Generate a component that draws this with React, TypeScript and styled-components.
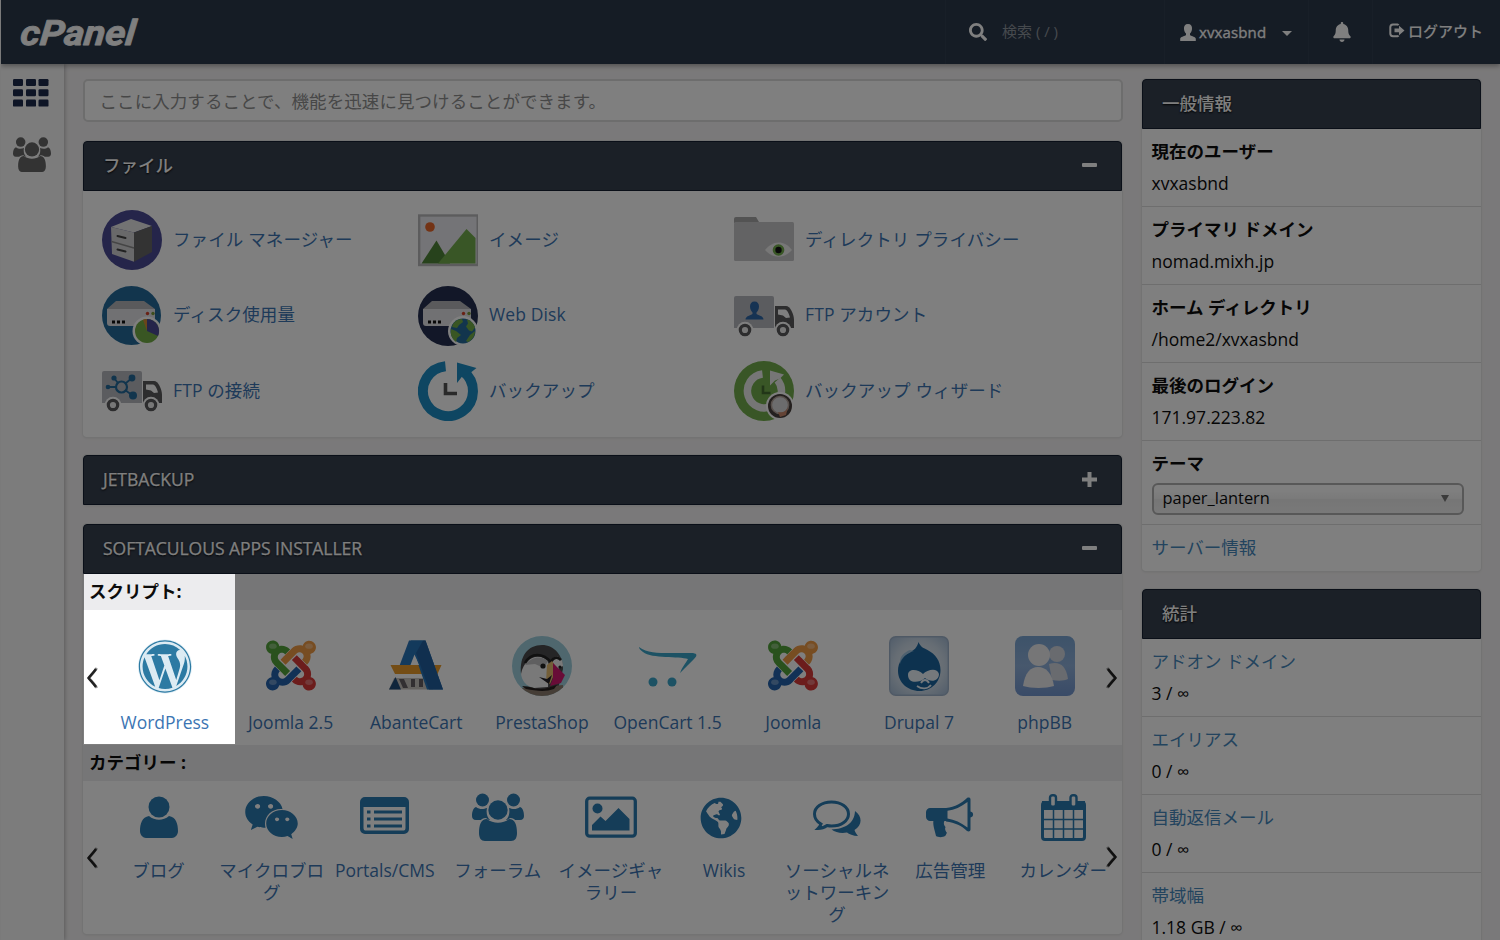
import React from "react";
import styled, { createGlobalStyle, css } from "styled-components";
import { FaWordpress, FaGlobeAmericas, FaWeixin, FaBell, FaSearch } from "react-icons/fa";

const GlobalStyle = createGlobalStyle`
  * { box-sizing: border-box; }
  html, body { margin: 0; padding: 0; overflow: hidden; }
  body {
    font-family: "Open Sans", "Noto Sans CJK JP", sans-serif;
    font-size: 17.5px;
    color: #0c0c0c;
    background: #f5f3f4;
  }
  svg { display: block; flex: none; }
`;

const navy = "#2b384a";
const panelNavy = "#36404f";
const link = "#3c75b3";
const iconBlue = "#2b7ab0";

const Page = styled.div`
  position: relative;
  width: 1500px;
  height: 940px;
  overflow: hidden;
  border-left: 1px solid #7a7a7a;
  background: #f5f3f4;
  display: flex;
  flex-direction: column;
`;

/* ---------- top bar ---------- */
const TopBar = styled.header`
  height: 64px;
  flex: none;
  display: flex;
  align-items: stretch;
  background: ${navy};
  color: #fff;
  font-size: 15px;
  box-shadow: 0 2px 5px rgba(0, 0, 0, 0.35);
  z-index: 1;
`;
const Brand = styled.div`
  flex: 1;
  display: flex;
  align-items: center;
  padding-left: 18px;
`;
const NavCell = styled.div<{ $w: number; $pad: number; $lift?: number }>`
  width: ${(p) => p.$w}px;
  padding-left: ${(p) => p.$pad}px;
  padding-bottom: ${(p) => p.$lift ?? 0}px;
  display: flex;
  align-items: center;
  border-left: 1px solid #303e50;
  white-space: nowrap;
`;
const SearchHint = styled.span`
  margin-left: 15px;
  padding-bottom: 4px;
  color: #8d949c;
`;
const NavText = styled.span<{ $latin?: boolean }>`
  margin-left: 3px;
  padding-bottom: 1px;
  font-weight: 500;
  -webkit-text-stroke: ${(p) => (p.$latin ? "0.3px #fff" : "0")};
  letter-spacing: ${(p) => (p.$latin ? "0.12px" : "0")};
`;
const Caret = styled.span`
  margin: 3px 0 0 16px;
  border: 5px solid transparent;
  border-top-color: #fff;
  border-bottom: 0;
`;

/* ---------- frame ---------- */
const Body = styled.div`
  flex: 1;
  display: flex;
  min-height: 0;
`;
const Sidebar = styled.nav`
  width: 63px;
  flex: none;
  padding: 15px 0 0 12px;
  display: flex;
  flex-direction: column;
  gap: 30px;
  background: #f9f9f9;
  box-shadow: 1px 0 4px rgba(0, 0, 0, 0.25);
`;
const Main = styled.main`
  width: 1040px;
  margin-left: 19px;
  padding: 15px 1.5px 0 0;
  flex: none;
`;
const Aside = styled.aside`
  width: 339px;
  margin-left: 19px;
  padding-top: 15px;
  flex: none;
`;
const QuickFind = styled.div`
  height: 43px;
  margin-right: -1.5px;
  border: 2px solid #dadada;
  border-radius: 5px;
  background: #fff;
  padding-left: 14.5px;
  line-height: 40px;
  letter-spacing: 0.07px;
  color: #8f8f8f;
`;

/* ---------- panels ---------- */
const Panel = styled.section<{ $top: number }>`
  margin-top: ${(p) => p.$top}px;
  background: #fff;
  border-radius: 4px;
  box-shadow: 0 0 0 1px #e6e6e6, 0 1px 3px rgba(0, 0, 0, 0.1);
`;
const PanelHead = styled.h2`
  margin: 0;
  height: 50px;
  padding: 0 24px 2px 19px;
  display: flex;
  align-items: center;
  justify-content: space-between;
  border: 1px solid #151f30;
  border-radius: 4px 4px 0 0;
  background: ${panelNavy};
  color: #fff;
  font-size: 17.5px;
  font-weight: 500;
  text-shadow: 0 1px 2px #000;
`;
const HeadText = styled.span<{ $latin?: boolean }>`
  letter-spacing: ${(p) => (p.$latin ? "-0.03px" : "0")};
  -webkit-text-stroke: ${(p) => (p.$latin ? "0.25px #fff" : "0")};
  padding-bottom: ${(p) => (p.$latin ? 0 : 2)}px;
`;
const FileGrid = styled.div`
  height: 246px;
  padding: 19px 0 0 19px;
  display: grid;
  grid-template-columns: repeat(3, 316px);
  grid-template-rows: repeat(3, 60px);
  row-gap: 15.5px;
`;
const Tool = styled.a`
  display: flex;
  align-items: center;
  gap: 11px;
  color: ${link};
  white-space: nowrap;
`;
const ToolName = styled.span`
  padding-bottom: 4px;
  letter-spacing: 0.12px;
`;
const StripTitle = styled.div`
  height: 36px;
  padding-left: 6px;
  line-height: 34px;
  font-weight: 700;
  background: #ececee;
`;
const Strip = styled.div<{ $h: number }>`
  height: ${(p) => p.$h}px;
  position: relative;
  padding-left: 19px;
  display: flex;
`;
const Arrow = styled.span<{ $side: "left" | "right"; $top: number }>`
  position: absolute;
  top: ${(p) => p.$top}px;
  ${(p) => (p.$side === "left" ? css`left: 3px;` : css`right: 3.5px;`)}
`;
const Script = styled.a`
  width: 125.7px;
  flex: none;
  padding-top: 26px;
  display: flex;
  flex-direction: column;
  align-items: center;
  color: ${link};
  white-space: nowrap;
`;
const ScriptName = styled.span`
  margin-top: 14px;
  line-height: 24px;
`;
const Category = styled.a`
  width: 113.1px;
  flex: none;
  display: flex;
  flex-direction: column;
  align-items: center;
  color: ${link};
  text-align: center;
  white-space: nowrap;
`;
const CatIcon = styled.span<{ $top: number; $right: number }>`
  height: 78px;
  padding-top: ${(p) => p.$top}px;
  padding-right: ${(p) => p.$right}px;
  display: flex;
  align-items: flex-start;
`;
const CatLabel = styled.span`
  line-height: 22px;
`;

/* ---------- info column ---------- */
const InfoRow = styled.div<{ $h?: number }>`
  height: ${(p) => p.$h ?? 78}px;
  padding: 6px 0 0 9.5px;
  line-height: 32px;
  border-bottom: 1px solid #dcdcdc;
  white-space: nowrap;
  &:last-child { border-bottom: 0; }
`;
const InfoName = styled.div<{ $link?: boolean }>`
  font-weight: ${(p) => (p.$link ? 400 : 700)};
  color: ${(p) => (p.$link ? "#4688bd" : "inherit")};
`;
const ThemeSelect = styled.div`
  width: 312px;
  height: 32px;
  margin-top: 3.5px;
  padding: 0 13px 1px 9px;
  display: flex;
  align-items: center;
  justify-content: space-between;
  border: 2px solid #b0b0b0;
  border-radius: 6px;
  font-size: 16.4px;
  background: linear-gradient(#fff 20%, #f4f4f4 50%, #ececec 52%, #f3f3f3);
`;
const Triangle = styled.span`
  border: 4px solid transparent;
  border-top: 7px solid #777;
  border-bottom: 0;
`;

/* Dims the page except for the highlighted first script. */
const Spotlight = styled.div`
  position: absolute;
  left: 83px;
  top: 574px;
  width: 151px;
  height: 170px;
  box-shadow: 0 0 0 2000px rgba(0, 0, 0, 0.5);
  pointer-events: none;
  z-index: 5;
`;

/* ---------- drawings ---------- */
const Logo = () => (
  <svg width="124" height="40" viewBox="0 0 124 40">
    <text x="4" y="32.500" transform="skewX(-6)" textLength="115" lengthAdjust="spacingAndGlyphs" fill="#fff" stroke="#fff" strokeWidth=".8" strokeLinejoin="round"
      fontFamily="Roboto, sans-serif" fontWeight="700" fontStyle="italic" fontSize="35">cPanel</text>
  </svg>
);
const GridIcon = () => (
  <svg width="36" height="28" viewBox="0 0 36 28" fill="#1d2a4c">
    {[0, 10.3, 20.6].map((y) => [0, 13, 25.5].map((x) => <rect key={`${x}-${y}`} x={x} y={y} width="10" height="7" rx="1.2" />))}
  </svg>
);
const UsersIcon = ({ w, color }: { w: number; color: string }) => (
  <svg width={w} height={(w * 48) / 52} viewBox="0 0 52 48" fill={color}>
    <circle cx="10.5" cy="7" r="6.5" />
    <circle cx="41.5" cy="7" r="6.5" />
    <path d="M4 14c4 3 8 2 11 1-1 5 0 9 3 12H4c-3 0-4-2-4-4 0-4 1-8 4-9zM48 14c-4 3-8 2-11 1 1 5 0 9-3 12h14c3 0 4-2 4-4 0-4-1-8-4-9z" />
    <circle cx="26" cy="17" r="11" fill="#fff" />
    <path d="M14 25c6 5 18 5 24 0 6 0 9 6 9 14H5c0-8 3-14 9-14z" fill="#fff" />
    <circle cx="26" cy="17" r="9.7" />
    <path d="M15 26c6 5 16 5 22 0 6 0 8 6 8 14 0 5-2 8-6 8H13c-4 0-6-3-6-8 0-8 2-14 8-14z" />
  </svg>
);
const PersonSmall = () => (
  <svg width="16" height="17" viewBox="0 0 16 17" fill="#fff">
    <path d="M8 0c3 0 4.300 2 4 5-.2 2-1 3.500-2 4.500v1.800c2 1 5.500 1.700 5.800 3.500V17H.2v-2.200c.3-1.800 3.800-2.500 5.800-3.500V9.500C5 8.500 4.200 7 4 5c-.3-3 1-5 4-5z" />
  </svg>
);
const LogoutIcon = () => (
  <svg width="16" height="15" viewBox="0 0 16 15">
    <path d="M9.500 2.200A1.500 1.500 0 0 0 8.500 1.500H4A2.800 2.800 0 0 0 1.300 4.300v6.200A2.800 2.800 0 0 0 4 13.300h4.500a1.500 1.500 0 0 0 1-.8" fill="none" stroke="#fff" strokeWidth="2" />
    <path d="M5.500 5.500h4.500V2.700l5.500 4.700-5.500 4.800V9.300H5.500z" fill="#fff" />
  </svg>
);
const Chevron = ({ flip }: { flip?: boolean }) => (
  <svg width="13" height="24" viewBox="0 0 13 24">
    <g transform={flip ? "translate(13 0) scale(-1 1)" : undefined} fill="none">
      <path d="M10.800 2C9 5 5 9.500 3 12c2 2.500 6 6.500 7.800 10" stroke="#999" strokeWidth="2.600" />
      <path d="M10 3C8 6 4 10 2.500 12c1.500 2 5.500 6 7.500 9" stroke="#222" strokeWidth="2.400" />
    </g>
  </svg>
);
const Minus = () => <svg width="15" height="5"><rect width="15" height="4" rx="1" fill="#fff" /></svg>;
const Plus = () => <svg width="15" height="15"><path d="M5.500 0h4v5.500H15v4H9.500V15h-4V9.500H0v-4h5.500z" fill="#fff" /></svg>;

const S = (p: { children: React.ReactNode }) => <svg width="60" height="60" viewBox="0 0 60 60">{p.children}</svg>;

const FileManagerIcon = () => (
  <S>
    <circle cx="30" cy="30" r="30" fill="#4b4a94" />
    <path d="M9 17 29 9l21 7-18 6.500z" fill="#e6e6e6" />
    <path d="M9 17l23 5.500v29.300L10 44z" fill="#d2d2d4" />
    <path d="M32 22.500 50 16v26L32 51.800z" fill="#666" />
    <path d="M9.500 31.500 32 38" stroke="#8b8b8b" strokeWidth="1.500" />
    <path d="M15.500 26l8 2M15.500 39.500l8 2" stroke="#444" strokeWidth="2" strokeLinecap="round" />
  </S>
);
const Drive = () => (
  <>
    <path d="M14 15h28l11 8H5z" fill="#b5b5b8" />
    <path d="M5 23h48v14a3 3 0 0 1-3 3H8a3 3 0 0 1-3-3z" fill="#e2e2e6" />
    <path d="M10 34.500h3v3h-3zM15 34.500h3v3h-3zM20 34.500h3v3h-3z" fill="#111" />
    <circle cx="45.500" cy="27.500" r="1.700" fill="#d2432b" />
    <circle cx="51" cy="27.500" r="1.700" fill="#7a9c3a" />
  </>
);
const DiskUsageIcon = () => (
  <S>
    <circle cx="29.500" cy="29.500" r="29.500" fill="#246b9b" />
    <Drive />
    <circle cx="45" cy="45" r="14.500" fill="#fff" />
    <circle cx="45" cy="45" r="12" fill="#72ad47" />
    <path d="M45 45V33a12 12 0 0 1 11 17z" fill="#4b4a94" />
    <path d="M45 45V33a12 12 0 0 0-4 .8z" fill="#d58a35" />
  </S>
);
const WebDiskIcon = () => (
  <S>
    <circle cx="30" cy="30" r="30" fill="#242e50" />
    <Drive />
    <circle cx="45" cy="45" r="15" fill="#fff" />
    <circle cx="45" cy="45" r="12.500" fill="#246b9b" />
    <path d="M35 38c3-4 6-5 9-5l1 3-4 3-2 3-5-1zM33 43l5 2 5 4-4 3-1 4c-4-3-6-8-5-13zM49 33.500c4 1 7 4 8 8l-3 4-3-1-3-4 2-3zM57 45c0 5-3 9-7 11l-2-1 4-6z" fill="#72ad47" />
  </S>
);
const ImagesIcon = () => (
  <S>
    <rect x="1.200" y="5.500" width="58.500" height="49.500" fill="#e9e9ee" stroke="#b9b9bb" strokeWidth="2.400" />
    <circle cx="12" cy="17" r="4.800" fill="#e7662b" />
    <path d="M3.500 53.500 18.500 30.500 32 53.500z" fill="#4f8438" />
    <path d="M20 53.500 48.500 19 57.500 28v25.500z" fill="#72ad4c" />
  </S>
);
const PrivacyIcon = () => (
  <S>
    <path d="M0 13V9a2 2 0 0 1 2-2h20l3 5z" fill="#a6a6a6" />
    <rect y="12" width="60" height="39" rx="1.500" fill="#c7c7c9" />
    <path d="M31 40c6-8 18-12 27 0-8 9-19 9-27 0z" fill="#eee" />
    <circle cx="44.500" cy="40" r="5.800" fill="#72ad4c" />
    <circle cx="44.500" cy="40" r="3.200" fill="#111" />
  </S>
);
const Truck = () => (
  <>
    <path d="M0 12a2 2 0 0 1 2-2h36a2 2 0 0 1 2 2v30H0z" fill="#b7b8bf" />
    <path d="M41 20h11c4 0 8 8 8 14v8H41z" fill="#5a5a5c" />
    <path d="M44 23.500h7c2 0 4 4 5 8l-4 .5-3-2.500-5-1z" fill="#fff" />
    {[11, 49].map((x) => (
      <g key={x}>
        <circle cx={x} cy="44" r="8.300" fill="#fff" />
        <circle cx={x} cy="44" r="4.700" fill="#eee" stroke="#5a5a5c" strokeWidth="3.200" />
      </g>
    ))}
  </>
);
const FtpAccountsIcon = () => (
  <S>
    <Truck />
    <path d="M20.500 15.500c3 0 4.500 2 4.500 5s-1.500 5-2.500 6v1.500c2 1.500 7 2 7 5.500h-18c0-3.500 5-4 7-5.500V26.500c-1-1-2.500-3-2.500-6s1.500-5 4.500-5z" fill="#2d66a6" />
  </S>
);
const FtpConnectionIcon = () => (
  <S>
    <Truck />
    <g stroke="#246b9b" strokeWidth="1.800" fill="none">
      <path d="M6 26h8M12 17l4 5M24 22l6-5M23 29l7 5" />
      <circle cx="19.500" cy="26" r="5.500" strokeWidth="2.200" />
    </g>
    <g fill="#246b9b"><circle cx="6" cy="26" r="2.300" /><circle cx="12" cy="17" r="2.600" /><circle cx="30" cy="17" r="3.400" /><circle cx="31" cy="34.500" r="4" /></g>
  </S>
);
const BackupIcon = () => (
  <S>
    <path d="M27.500 5.200A25 25 0 1 0 45.500 10.500" fill="none" stroke="#1c8dc4" strokeWidth="10" />
    <path d="M39 1.500 58.500 7l-5 4-9 4-5.500 7z" fill="#1c8dc4" />
    <path d="M27.500 22v10.500H39" fill="none" stroke="#555" strokeWidth="3.600" />
  </S>
);
const WizardIcon = () => (
  <S>
    <circle cx="30" cy="30" r="30" fill="#72ad4c" />
    <path d="M28.500 13A17 17 0 1 0 43.500 19" fill="none" stroke="#ececec" strokeWidth="7.500" />
    <path d="M36 9.500 50 13.500l-4 4-5 2-5 5z" fill="#ececec" />
    <path d="M29 24.500v7.500h7.500" fill="none" stroke="#446c30" strokeWidth="2.600" />
    <circle cx="46" cy="45" r="14" fill="#fff" />
    <circle cx="46" cy="45" r="12" fill="#49403e" />
    <circle cx="46" cy="44" r="8.600" fill="#d9d9db" stroke="#b3a39a" strokeWidth="1.500" />
    <path d="M44 51c4 1 8 0 10-5l-2 8-6 2z" fill="#c8876a" />
  </S>
);

const arm =
  "M.6 92.100C.6 58.800 27.400 32 60.400 32c30 0 54.500 21.900 59.200 50.200 32.600-7.600 67.100.6 96.500 30l-44.300 44.300c-20.500-20.500-42.600-16.300-55.400-3.500-14.300 14.300-14.300 37.900 0 52.200l99.500 99.500-44 44.300c-87.700-87.200-49.700-49.700-99.800-99.700-26.800-26.500-35-64.800-24.800-98.900C20.400 144.600.6 120.700.6 92.100z";
const JoomlaIcon = () => (
  <S>
    <g transform="translate(5 1) scale(.1115)">
      {[["#52a33b", 0], ["#ef9a45", 90], ["#d83a38", 180], ["#2463ac", 270]].map(([c, r]) => (
        <path key={r} d={arm} fill={c as string} transform={`rotate(${r} 224 256)`} />
      ))}
      {[[62, 82], [386, 82], [62, 406], [386, 406]].map(([x, y]) => (
        <ellipse key={`${x}${y}`} cx={x} cy={y} rx="34" ry="24" fill="#fff" opacity=".3" />
      ))}
    </g>
  </S>
);
const WordPressIcon = () => (
  <S>
    <circle cx="30" cy="30.500" r="27" fill="#dcebf3" />
    <g transform="translate(3 3.500)"><FaWordpress size={54} color="#2c7aa3" /></g>
  </S>
);
const AbanteIcon = () => (
  <S>
    <path d="M3 53.500 8 42h39v11.500z" fill="#c9c4bf" />
    <path d="M3 53.500 9.500 41 15 53.500z" fill="#214a76" />
    <path d="M13 43h5l4 9h-5zM25 43h4v8h-4zM33 43h4v8h-4z" fill="#655f63" />
    <path d="M13 31 23 4.500h14L24 34H13z" fill="#2d75b8" />
    <path d="M4.500 29h51l-4 9H9z" fill="#e89a2a" />
    <path d="M25 4.500h14.500L57 53.500H41L28.500 18l-5 11h-9z" fill="#2674b8" />
    <path d="M28.500 18.500 33 29h-8.500z" fill="#fff" />
    <path d="M30 17 37 4.500h2.500L57 53.500H43z" fill="#205f9f" />
  </S>
);
const PrestaIcon = () => (
  <S>
    <defs><clipPath id="presta"><circle cx="30" cy="30" r="30" /></clipPath></defs>
    <g clipPath="url(#presta)">
      <rect width="60" height="60" fill="#9ecfdd" />
      <path d="M9 38C7 20 16 9 30 9c12 0 21 10 21 24l-5 20-20 2z" fill="#4b4a4c" />
      <path d="M9 38c2-12 11-19 20-17 4 1 7 4 8 8l-1 22-14 1C13 50 10 44 9 38z" fill="#f2f2f2" />
      <path d="M13 29c6-8 16-10 23-4l-4 7-9-4z" fill="#bfbfc1" />
      <path d="M41 22c5-4 10 1 10 8l-5 3-6-6z" fill="#f2f2f2" />
      <path d="M13 27C19 16 31 17 39 26c3-6 7-5 10-2" fill="none" stroke="#222" strokeWidth="2.600" />
      <path d="M35 29l5-4 5 7-7 16-4-2z" fill="#e7bd71" />
      <path d="M41 27 53 39l-4 8-11 3 3-8z" fill="#d1186f" />
      <path d="M40 39l-3 9-10-7 8 2z" fill="#252126" />
      <circle cx="31" cy="30" r="2.600" fill="#222" /><circle cx="48" cy="31" r="1.600" fill="#222" />
      <path d="M10 52c8-3 10 0 16 1 9 1 16-4 25-4v11H10z" fill="#8c7d6f" />
      <path d="M10 50c10 0 15 5 25 2l10-3-3 4c-8 3-18 2-28 0z" fill="#27211f" />
    </g>
  </S>
);
const OpenCartIcon = () => (
  <S>
    <path d="M1 11c8 6 18 6 32 6h20c6 0 7 2 3 6L42 37c2-6 6-10 8-14-9-3-36 0-45-7-3-2-4-4-4-5z" fill="#3aa5c8" />
    <circle cx="15" cy="46" r="4.500" fill="#3aa5c8" /><circle cx="34" cy="46" r="4.500" fill="#3aa5c8" />
  </S>
);
const DrupalIcon = () => (
  <S>
    <defs><radialGradient id="dr" r=".72"><stop offset="0" stopColor="#f4f8fb" /><stop offset=".6" stopColor="#ccdae8" /><stop offset="1" stopColor="#9db6d2" /></radialGradient></defs>
    <rect x=".7" y=".7" width="58.600" height="58.600" rx="6" fill="url(#dr)" stroke="#9fb3cb" strokeWidth="1.400" />
    <path d="M29.500 6c2 5 5 6 9 8 8 4 13 11 13 20 0 12-9 21-21 21S9 46 9 35c0-9 5-15 11-18 5-3 8-5 9.500-11z" fill="#1b659f" />
    <path d="M25 15C17 17 13 22 11 28c-1-8 5-12 10-14z" fill="#84b5da" opacity=".7" />
    <path d="M19 39c0-7 10-6 15-1 4-4 14-7 16 0 0 7-8 9-14 4-7 6-17 5-17-3z" fill="#eaf2f8" />
    <path d="M32 47c2-4 6-4 8 0M28 50c5 3.500 11 3 14-1" fill="none" stroke="#eaf2f8" strokeWidth="1.800" />
  </S>
);
const PhpBBIcon = () => (
  <S>
    <defs><linearGradient id="pb" x2="0" y2="1"><stop offset="0" stopColor="#7ba6d4" /><stop offset=".5" stopColor="#8fb0da" /><stop offset="1" stopColor="#7396cf" /></linearGradient></defs>
    <rect width="60" height="60" rx="8" fill="url(#pb)" />
    <g fill="#d2d6de"><circle cx="42" cy="18" r="8" /><path d="M34 28c10-3 17 1 19 15-4 2-10 2-16 1z" /></g>
    <g fill="#ececef"><circle cx="24" cy="19" r="11" /><path d="M8 50c2-13 7-19 15-19s14 6 16 19c-8 2.500-23 2.500-31 0z" /></g>
  </S>
);

const BlogIcon = () => (
  <svg width="38" height="46" viewBox="0 0 38 46" fill={iconBlue}>
    <circle cx="19" cy="14" r="10.500" />
    <path d="M9 23c6 5 14 5 20 0 7 1 9 8 9 15 0 4-3 7-6 7H6c-3 0-6-3-6-7 0-7 2-14 9-15z" />
  </svg>
);
const PortalsIcon = () => (
  <svg width="49" height="44" viewBox="0 0 49 44" fill={iconBlue}>
    <path fillRule="evenodd" d="M5 4h39a5 5 0 0 1 5 5v27a5 5 0 0 1-5 5H5a5 5 0 0 1-5-5V9a5 5 0 0 1 5-5zM3.500 14v21c0 2 1 2.500 2.500 2.500h37c1.500 0 2.500-.5 2.500-2.500V14z" />
    <path d="M7 17.500h3.500v3H7zM14 17.500h28v3H14zM7 24.500h3.500v3H7zM14 24.500h28v3H14zM7 31.500h3.500v3H7zM14 31.500h28v3H14z" />
  </svg>
);
const GalleryIcon = () => (
  <svg width="52" height="46" viewBox="0 0 52 46">
    <rect x="1.700" y="5.200" width="48.600" height="38" rx="3" fill="none" stroke={iconBlue} strokeWidth="3.300" />
    <circle cx="12.500" cy="15.500" r="5" fill={iconBlue} />
    <path d="M7 37.500V32l8.500-8.500 5 4.500L33.500 15 44.500 26v11.500z" fill={iconBlue} />
  </svg>
);
const CommentsIcon = () => (
  <svg width="48" height="46" viewBox="0 0 48 46">
    <path d="M18.500 9C8.500 9 1.500 14.500 1.500 21c0 4 2 7.500 6.500 10-.5 1.500-1.500 3-3 4.500 4 0 7-1.500 9-3 1.500.3 3 .5 4.500.5 10 0 17-5.500 17-12s-7-12-17-12z" fill="none" stroke={iconBlue} strokeWidth="3" />
    <path d="M42 18c8 6 7 14-.5 19 .5 2 2 4 3.500 6-5 0-9-2-11-3.500-6 1-11.500 0-15.500-3C31 36 41.500 31 42 18z" fill={iconBlue} />
  </svg>
);
const BullhornIcon = () => (
  <svg width="48" height="46" viewBox="0 0 48 46" fill={iconBlue}>
    <path d="M4 15h17v13H4c-2 0-4-2-4-4v-5c0-2 2-4 4-4z" />
    <path fillRule="evenodd" d="M20 15c9-1 16-5 21-10 1.500-1 3.500-.5 3.500 1.500v12c3.500.5 3.500 5.500 0 6v12c0 2-2 2.500-3.500 1.500-5-5-12-8.500-21-9.500zm1.500 2.800v7.700c7 1 13.500 4 20 9V9c-6.500 5-13 8-20 8.800z" />
    <path d="M7.500 27H19c-2 3-1 5 .5 7-1 2 0 4 1.500 6-1 .5-.5 2-2 3-2 1.500-7 1.500-9 0-1-5-3.500-11-2.500-16z" />
  </svg>
);
const CalendarIcon = () => (
  <svg width="45" height="48" viewBox="0 0 45 48">
    <rect x="1.500" y="9.500" width="42" height="37" rx="2.500" fill="none" stroke={iconBlue} strokeWidth="3" />
    <path d="M1 8h43v9H1z" fill={iconBlue} />
    <path d="M12.500 17v29M22.500 17v29M32.500 17v29M2 26.500h41M2 36h41" stroke={iconBlue} strokeWidth="1.500" />
    <g fill="#fff" stroke={iconBlue} strokeWidth="2.400"><rect x="9" y="2.200" width="6" height="11.500" rx="2.500" /><rect x="29.500" y="2.200" width="6" height="11.500" rx="2.500" /></g>
  </svg>
);

const tools: [string, React.FC][] = [
  ["ファイル マネージャー", FileManagerIcon],
  ["イメージ", ImagesIcon],
  ["ディレクトリ プライバシー", PrivacyIcon],
  ["ディスク使用量", DiskUsageIcon],
  ["Web Disk", WebDiskIcon],
  ["FTP アカウント", FtpAccountsIcon],
  ["FTP の接続", FtpConnectionIcon],
  ["バックアップ", BackupIcon],
  ["バックアップ ウィザード", WizardIcon],
];
const scripts: [string, React.FC][] = [
  ["WordPress", WordPressIcon],
  ["Joomla 2.5", JoomlaIcon],
  ["AbanteCart", AbanteIcon],
  ["PrestaShop", PrestaIcon],
  ["OpenCart 1.5", OpenCartIcon],
  ["Joomla", JoomlaIcon],
  ["Drupal 7", DrupalIcon],
  ["phpBB", PhpBBIcon],
];
interface CategoryItem {
  lines: string[];
  icon: React.ReactNode;
  top?: number;
  right?: number;
}
const categories: CategoryItem[] = [
  { lines: ["ブログ"], icon: <BlogIcon /> },
  { lines: ["マイクロブロ", "グ"], icon: <FaWeixin size={55} color={iconBlue} />, top: 9 },
  { lines: ["Portals/CMS"], icon: <PortalsIcon /> },
  { lines: ["フォーラム"], icon: <UsersIcon w={52} color={iconBlue} /> },
  { lines: ["イメージギャ", "ラリー"], icon: <GalleryIcon /> },
  { lines: ["Wikis"], icon: <FaGlobeAmericas size={42} color={iconBlue} />, top: 15.5, right: 6 },
  { lines: ["ソーシャルネ", "ットワーキン", "グ"], icon: <CommentsIcon /> },
  { lines: ["広告管理"], icon: <BullhornIcon /> },
  { lines: ["カレンダー"], icon: <CalendarIcon /> },
];
const general = [
  ["現在のユーザー", "xvxasbnd"],
  ["プライマリ ドメイン", "nomad.mixh.jp"],
  ["ホーム ディレクトリ", "/home2/xvxasbnd"],
  ["最後のログイン", "171.97.223.82"],
];
const stats = [
  ["アドオン ドメイン", "3 / ∞"],
  ["エイリアス", "0 / ∞"],
  ["自動返信メール", "0 / ∞"],
  ["帯域幅", "1.18 GB / ∞"],
];

export default function App() {
  return (
    <Page>
      <GlobalStyle />
      <TopBar>
        <Brand><Logo /></Brand>
        <NavCell $w={219} $pad={23}><FaSearch size={18} /><SearchHint>検索 ( / )</SearchHint></NavCell>
        <NavCell $w={144} $pad={15}><PersonSmall /><NavText $latin>xvxasbnd</NavText><Caret /></NavCell>
        <NavCell $w={64} $pad={22.5}><FaBell size={20} /></NavCell>
        <NavCell $w={128} $pad={16} $lift={3}><LogoutIcon /><NavText>ログアウト</NavText></NavCell>
      </TopBar>
      <Body>
        <Sidebar>
          <GridIcon />
          <UsersIcon w={38} color="#666" />
        </Sidebar>
        <Main>
          <QuickFind>ここに入力することで、機能を迅速に見つけることができます。</QuickFind>
          <Panel $top={19}>
            <PanelHead><HeadText>ファイル</HeadText><Minus /></PanelHead>
            <FileGrid>
              {tools.map(([name, Icon]) => <Tool key={name}><Icon /><ToolName>{name}</ToolName></Tool>)}
            </FileGrid>
          </Panel>
          <Panel $top={18}>
            <PanelHead><HeadText $latin>JETBACKUP</HeadText><Plus /></PanelHead>
          </Panel>
          <Panel $top={19}>
            <PanelHead><HeadText $latin>SOFTACULOUS APPS INSTALLER</HeadText><Minus /></PanelHead>
            <StripTitle>スクリプト:</StripTitle>
            <Strip $h={135}>
              <Arrow $side="left" $top={56}><Chevron /></Arrow>
              {scripts.map(([name, Icon]) => <Script key={name}><Icon /><ScriptName>{name}</ScriptName></Script>)}
              <Arrow $side="right" $top={56}><Chevron flip /></Arrow>
            </Strip>
            <StripTitle>カテゴリー :</StripTitle>
            <Strip $h={153}>
              <Arrow $side="left" $top={65}><Chevron /></Arrow>
              {categories.map(({ lines, icon, top, right }) => (
                <Category key={lines[0]}>
                  <CatIcon $top={top ?? 12} $right={right ?? 0}>{icon}</CatIcon>
                  {lines.map((l) => <CatLabel key={l}>{l}</CatLabel>)}
                </Category>
              ))}
              <Arrow $side="right" $top={64}><Chevron flip /></Arrow>
            </Strip>
          </Panel>
        </Main>
        <Aside>
          <Panel $top={0}>
            <PanelHead><HeadText>一般情報</HeadText></PanelHead>
            {general.map(([name, value]) => (
              <InfoRow key={name}><InfoName>{name}</InfoName>{value}</InfoRow>
            ))}
            <InfoRow $h={84}>
              <InfoName>テーマ</InfoName>
              <ThemeSelect>paper_lantern<Triangle /></ThemeSelect>
            </InfoRow>
            <InfoRow $h={46}><InfoName $link>サーバー情報</InfoName></InfoRow>
          </Panel>
          <Panel $top={18.4}>
            <PanelHead><HeadText>統計</HeadText></PanelHead>
            {stats.map(([name, value]) => (
              <InfoRow key={name}><InfoName $link>{name}</InfoName>{value}</InfoRow>
            ))}
          </Panel>
        </Aside>
      </Body>
      <Spotlight />
    </Page>
  );
}
